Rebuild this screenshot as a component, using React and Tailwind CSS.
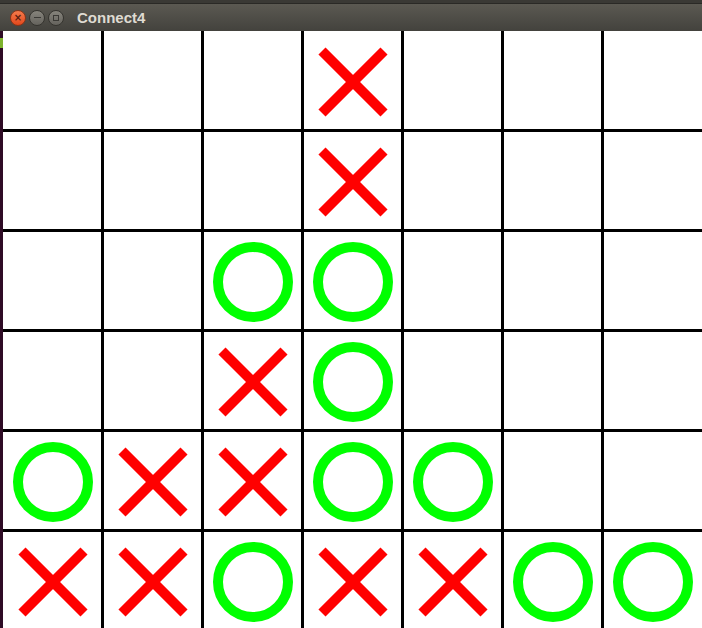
import React from 'react';

const BOARD = [
  '...X...',
  '...X...',
  '..OO...',
  '..XO...',
  'OXXOO..',
  'XXOXXOO',
];

const Cross = () => (
  <svg width="90" height="90" viewBox="0 0 90 90">
    <line x1="14" y1="14" x2="76" y2="76" stroke="#ff0000" strokeWidth="10" />
    <line x1="76" y1="14" x2="14" y2="76" stroke="#ff0000" strokeWidth="10" />
  </svg>
);

const Ring = () => (
  <svg width="90" height="90" viewBox="0 0 90 90">
    <circle cx="45" cy="45" r="35" fill="none" stroke="#00ff00" strokeWidth="10" />
  </svg>
);

const TitleBar = () => (
  <div className="h-[31px] flex flex-col">
    <div className="h-[3px] bg-[#3a3935]" />
    <div className="flex-1 flex items-center border-t border-[#2a2926] bg-gradient-to-b from-[#5b5952] to-[#43423d]">
      <div className="flex items-center gap-[3px] pl-[10px]">
        <div className="w-[16px] h-[16px] rounded-full bg-gradient-to-b from-[#f47a4b] to-[#e2471a] border border-[#8a3417] flex items-center justify-center">
          <span className="text-[10px] leading-none font-bold text-[#5a2010]" style={{ fontFamily: '"DejaVu Sans", sans-serif' }}>×</span>
        </div>
        <div className="w-[16px] h-[16px] rounded-full bg-gradient-to-b from-[#86847c] to-[#65635d] border border-[#35342f] flex items-center justify-center">
          <div className="w-[7px] h-[1px] bg-[#3a3935]" />
        </div>
        <div className="w-[16px] h-[16px] rounded-full bg-gradient-to-b from-[#86847c] to-[#65635d] border border-[#35342f] flex items-center justify-center">
          <div className="w-[6px] h-[6px] border border-[#3a3935]" />
        </div>
      </div>
      <span
        className="ml-[13px] text-[15px] font-bold text-[#dfdbd2] leading-none"
        style={{ fontFamily: '"Liberation Sans", Arial, sans-serif' }}
      >
        Connect4
      </span>
    </div>
  </div>
);

export default function App() {
  return (
    <div className="w-[702px] h-[628px] overflow-hidden bg-white flex flex-col">
      <TitleBar />
      <div className="flex flex-1 overflow-hidden">
        <div className="w-[3px] bg-[#2e0b25] flex flex-col shrink-0">
          <div className="mt-[7px] h-[10px] bg-[#7db22c]" />
        </div>
        <div className="grid grid-cols-[101px_repeat(5,100px)_100px] grid-rows-[101px_repeat(5,100px)] shrink-0">
          {BOARD.map((row, r) =>
            row.split('').map((v, c) => (
              <div
                key={`${r}-${c}`}
                className={`bg-white border-black ${c < 6 ? 'border-r-[3px]' : ''} ${r < 5 ? 'border-b-[3px]' : ''} flex items-start`}
              >
                {v !== '.' && (
                  <div className={`${c === 0 ? 'ml-[5px]' : 'ml-[4px]'} ${r === 0 ? 'mt-[6px]' : 'mt-[5px]'}`}>
                    {v === 'X' ? <Cross /> : <Ring />}
                  </div>
                )}
              </div>
            ))
          )}
        </div>
      </div>
    </div>
  );
}
